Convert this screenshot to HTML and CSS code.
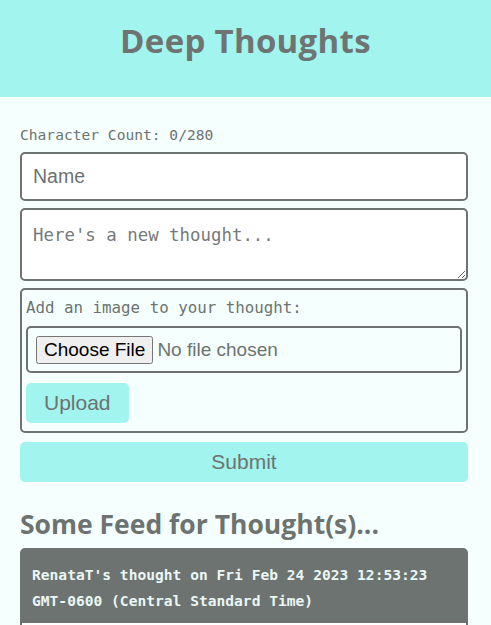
FILE: index.html
```html
<!DOCTYPE html>
<html>
<head>
<meta charset="utf-8">
<link rel="stylesheet" href="styles.css">
</head>
<body>
<header class="site-header">
  <h1 class="site-title">Deep Thoughts</h1>
</header>
<main class="content">
  <form class="thought-form">
    <p class="char-count">Character Count: 0/280</p>
    <input class="field field-name" type="text" placeholder="Name">
    <textarea class="field field-text" placeholder="Here's a new thought..."></textarea>
    <div class="image-box">
      <label class="image-label">Add an image to your thought:</label>
      <div class="file-box"><input class="file-input" type="file"></div>
      <div><button type="button" class="btn btn-upload">Upload</button></div>
    </div>
    <button type="button" class="btn btn-submit">Submit</button>
  </form>
  <h3 class="feed-title">Some Feed for Thought(s)...</h3>
  <div class="card">
    <p class="card-header">RenataT's thought on Fri Feb 24 2023 12:53:23 GMT-0600 (Central Standard Time)</p>
    <div class="card-body">Some thought text</div>
  </div>
</main>
</body>
</html>
```
FILE: styles.css
```css
html, body { margin: 0; padding: 0; }
body {
  background: #f5fffd;
  color: #6c7370;
  font-family: "Liberation Sans", Arial, sans-serif;
}
.site-header {
  background: #a2f4ee;
  height: 97px;
  display: flex;
  align-items: center;
  justify-content: center;
}
.site-title {
  margin: 0 0 16px;
  font-family: "Open Sans", sans-serif;
  font-weight: 700;
  font-size: 33px;
  color: #6f7472;
  letter-spacing: 0.3px;
}
.content { padding: 29px 23px 0 20px; }
.thought-form { display: flex; flex-direction: column; }
.char-count {
  margin: 0 0 8px;
  font-family: "DejaVu Sans Mono", monospace;
  font-size: 14.6px;
  line-height: 18px;
  color: #6c7370;
}
.field {
  box-sizing: border-box;
  width: 100%;
  border: 2px solid #6c7370;
  border-radius: 5px;
  background: #fff;
  margin: 0 0 7px;
}
.field-name {
  height: 49px;
  padding: 0 11px;
  font-family: "Liberation Sans", Arial, sans-serif;
  font-size: 19.5px;
}
.field-name::placeholder { color: #6c7370; }
.field-text {
  height: 73px;
  padding: 13px 11px;
  font-family: "DejaVu Sans Mono", monospace;
  font-size: 17.4px;
  line-height: 24px;
  resize: vertical;
}
.field-text::placeholder { color: #75797a; }
.image-box {
  border: 2px solid #6c7370;
  border-radius: 5px;
  padding: 8px 4px;
  display: flex;
  flex-direction: column;
  margin-bottom: 9px;
}
.image-label {
  font-family: "DejaVu Sans Mono", monospace;
  font-size: 15.8px;
  line-height: 20px;
  color: #6c7370;
  margin-bottom: 8px;
}
.file-box {
  border: 2px solid #6c7370;
  border-radius: 5px;
  height: 47px;
  box-sizing: border-box;
  display: flex;
  align-items: center;
  padding: 0 8px;
  margin-bottom: 10px;
}
.file-input {
  font-family: "Liberation Sans", Arial, sans-serif;
  font-size: 19px;
  color: #6c7370;
}
.file-input::file-selector-button {
  font-family: "Liberation Sans", Arial, sans-serif;
  font-size: 19px;
  color: #000;
}
.btn {
  border: none;
  border-radius: 5px;
  background: #a2f4ee;
  color: #6c7370;
  font-family: "Liberation Sans", Arial, sans-serif;
  font-size: 21px;
  cursor: pointer;
}
.btn-upload { height: 40px; padding: 0 18px; }
.btn-submit { height: 40px; width: 100%; }
.feed-title {
  margin: 25px 0 7px;
  font-family: "Open Sans", sans-serif;
  font-weight: 700;
  font-size: 26.5px;
  color: #6c7370;
  line-height: 34px;
}
.card {
  background: #6c7370;
  border-radius: 5px;
  padding: 0 2px 2px;
}
.card-header {
  margin: 0;
  padding: 14px 10px 9px;
  font-family: "DejaVu Sans Mono", monospace;
  font-weight: 700;
  font-size: 14.6px;
  line-height: 26px;
  color: #eaf7f5;
}
.card-body {
  background: #fff;
  padding: 12px;
  min-height: 40px;
}
```
